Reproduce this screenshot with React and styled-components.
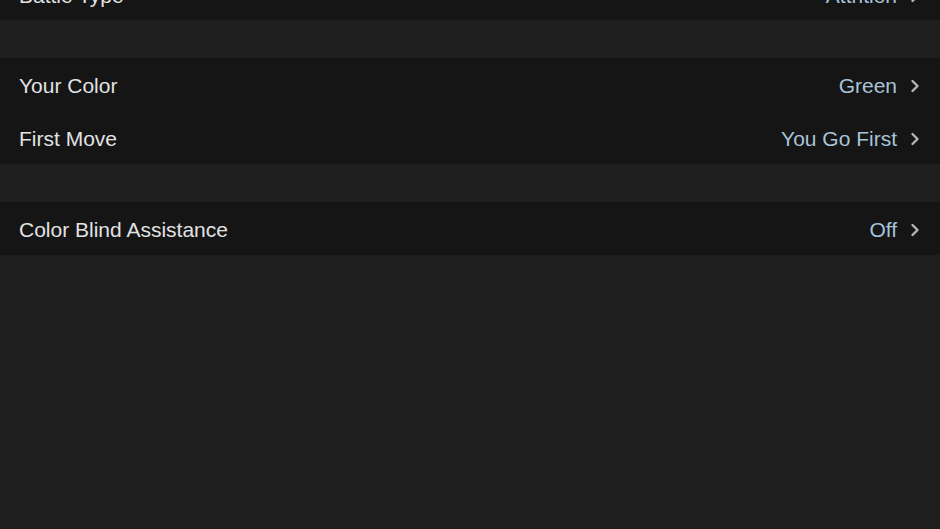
import styled, { createGlobalStyle } from 'styled-components';

const GlobalStyle = createGlobalStyle`
    html, body {
        margin: 0;
        padding: 0;
        background: #1e1e1e;
        height: 100%;
        overflow: hidden;
    }
`;

const Screen = styled.div`
    width: 940px;
    height: 529px;
    background: #1e1e1e;
    font-family: "Liberation Sans", Arial, sans-serif;
    overflow: hidden;
`;

const Content = styled.div`
    margin-top: -30px;
    display: flex;
    flex-direction: column;
    gap: 38px;
`;

const Group = styled.div`
    background: #151515;
    display: flex;
    flex-direction: column;
`;

const Row = styled.div`
    height: ${(p) => p.$height || 53}px;
    display: flex;
    align-items: center;
    justify-content: space-between;
    padding: 2px 20px 0 19px;
    box-sizing: border-box;
`;

const Label = styled.span`
    color: #e2e2e2;
    font-size: 21px;
`;

const Right = styled.div`
    display: flex;
    align-items: center;
    gap: 13px;
`;

const Value = styled.span`
    color: #a9c3d9;
    font-size: 21px;
`;

const Chevron = () => (
    <svg width="10" height="14" viewBox="0 0 10 14">
        <path d="M2.5 2 L7.5 7 L2.5 12" fill="none" stroke="#b4b4b4" strokeWidth="2.4" strokeLinecap="round" strokeLinejoin="round" />
    </svg>
);

const groups = [
    { height: 50, rows: [['Battle Type', 'Attrition']] },
    { rows: [['Your Color', 'Green'], ['First Move', 'You Go First']] },
    { rows: [['Color Blind Assistance', 'Off']] },
];

const App = () => {
    return (
        <Screen>
            <GlobalStyle />
            <Content>
                {groups.map((group, i) => (
                    <Group key={i}>
                        {group.rows.map(([label, value]) => (
                            <Row key={label} $height={group.height}>
                                <Label>{label}</Label>
                                <Right>
                                    <Value>{value}</Value>
                                    <Chevron />
                                </Right>
                            </Row>
                        ))}
                    </Group>
                ))}
            </Content>
        </Screen>
    );
};

export default App;
